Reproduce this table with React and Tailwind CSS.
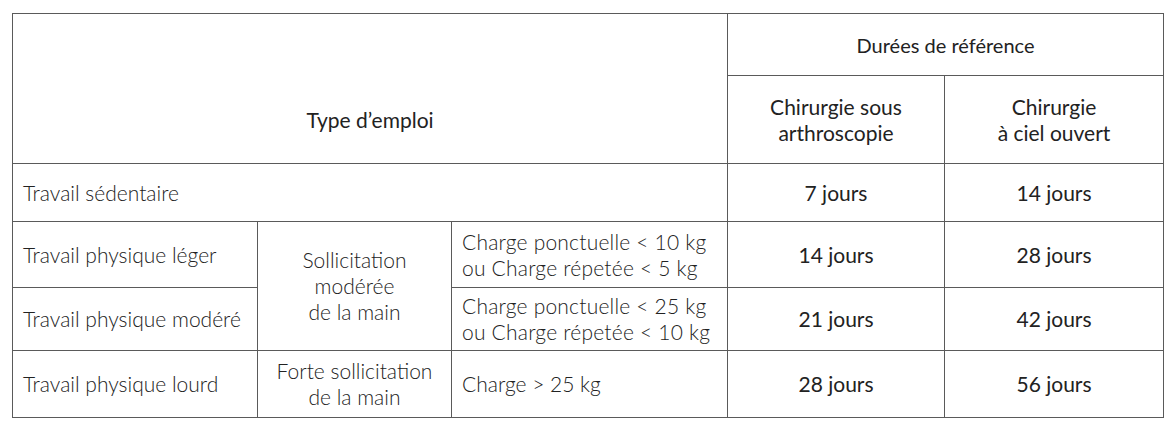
export default function App() {
  const cell = "border border-[#5a5a5a] align-middle";
  const rows = [
    { label: "Travail physique léger", charge: ["Charge ponctuelle < 10 kg", "ou Charge répetée < 5 kg"], a: "14 jours", b: "28 jours", h: "h-[66px]" },
    { label: "Travail physique modéré", charge: ["Charge ponctuelle < 25 kg", "ou Charge répetée < 10 kg"], a: "21 jours", b: "42 jours", h: "h-[63px]" },
  ];

  return (
    <div className="w-[1175px] h-[429px] bg-white pt-[13px] pl-[12px] font-['Lato','Open_Sans',sans-serif] text-[21px] text-[#222]">
      <table className="table-fixed border-collapse w-[1151px]">
        <colgroup>
          <col className="w-[245px]" />
          <col className="w-[194px]" />
          <col className="w-[276px]" />
          <col className="w-[217px]" />
          <col className="w-[219px]" />
        </colgroup>
        <tbody>
          <tr className="h-[62px]">
            <td colSpan={3} rowSpan={2} className={`${cell} text-center pt-[62px] font-normal`}>
              Type d’emploi
            </td>
            <td colSpan={2} className={`${cell} text-center font-normal text-[20px]`}>
              Durées de référence
            </td>
          </tr>
          <tr className="h-[88px]">
            <td className={`${cell} text-center leading-[26px] font-normal`}>
              Chirurgie sous
              <br />
              arthroscopie
            </td>
            <td className={`${cell} text-center leading-[26px] font-normal`}>
              Chirurgie
              <br />à ciel ouvert
            </td>
          </tr>
          <tr className="h-[58px]">
            <td colSpan={3} className={`${cell} pl-[10px] font-light`}>
              Travail sédentaire
            </td>
            <td className={`${cell} text-center font-normal`}>7 jours</td>
            <td className={`${cell} text-center font-normal`}>14 jours</td>
          </tr>
          {rows.map((r, i) => (
            <tr key={r.label} className={r.h}>
              <td className={`${cell} pl-[10px] font-light`}>{r.label}</td>
              {i === 0 && (
                <td rowSpan={2} className={`${cell} text-center leading-[26px] font-light`}>
                  Sollicitation
                  <br />
                  modérée
                  <br />
                  de la main
                </td>
              )}
              <td className={`${cell} pl-[10px] leading-[26px] font-light tracking-[0.01em]`}>
                {r.charge[0]}
                <br />
                {r.charge[1]}
              </td>
              <td className={`${cell} text-center font-normal`}>{r.a}</td>
              <td className={`${cell} text-center font-normal`}>{r.b}</td>
            </tr>
          ))}
          <tr className="h-[67px]">
            <td className={`${cell} pl-[10px] font-light`}>Travail physique lourd</td>
            <td className={`${cell} text-center leading-[26px] font-light`}>
              Forte sollicitation
              <br />
              de la main
            </td>
            <td className={`${cell} pl-[10px] font-light`}>Charge &gt; 25 kg</td>
            <td className={`${cell} text-center font-normal`}>28 jours</td>
            <td className={`${cell} text-center font-normal`}>56 jours</td>
          </tr>
        </tbody>
      </table>
    </div>
  );
}
